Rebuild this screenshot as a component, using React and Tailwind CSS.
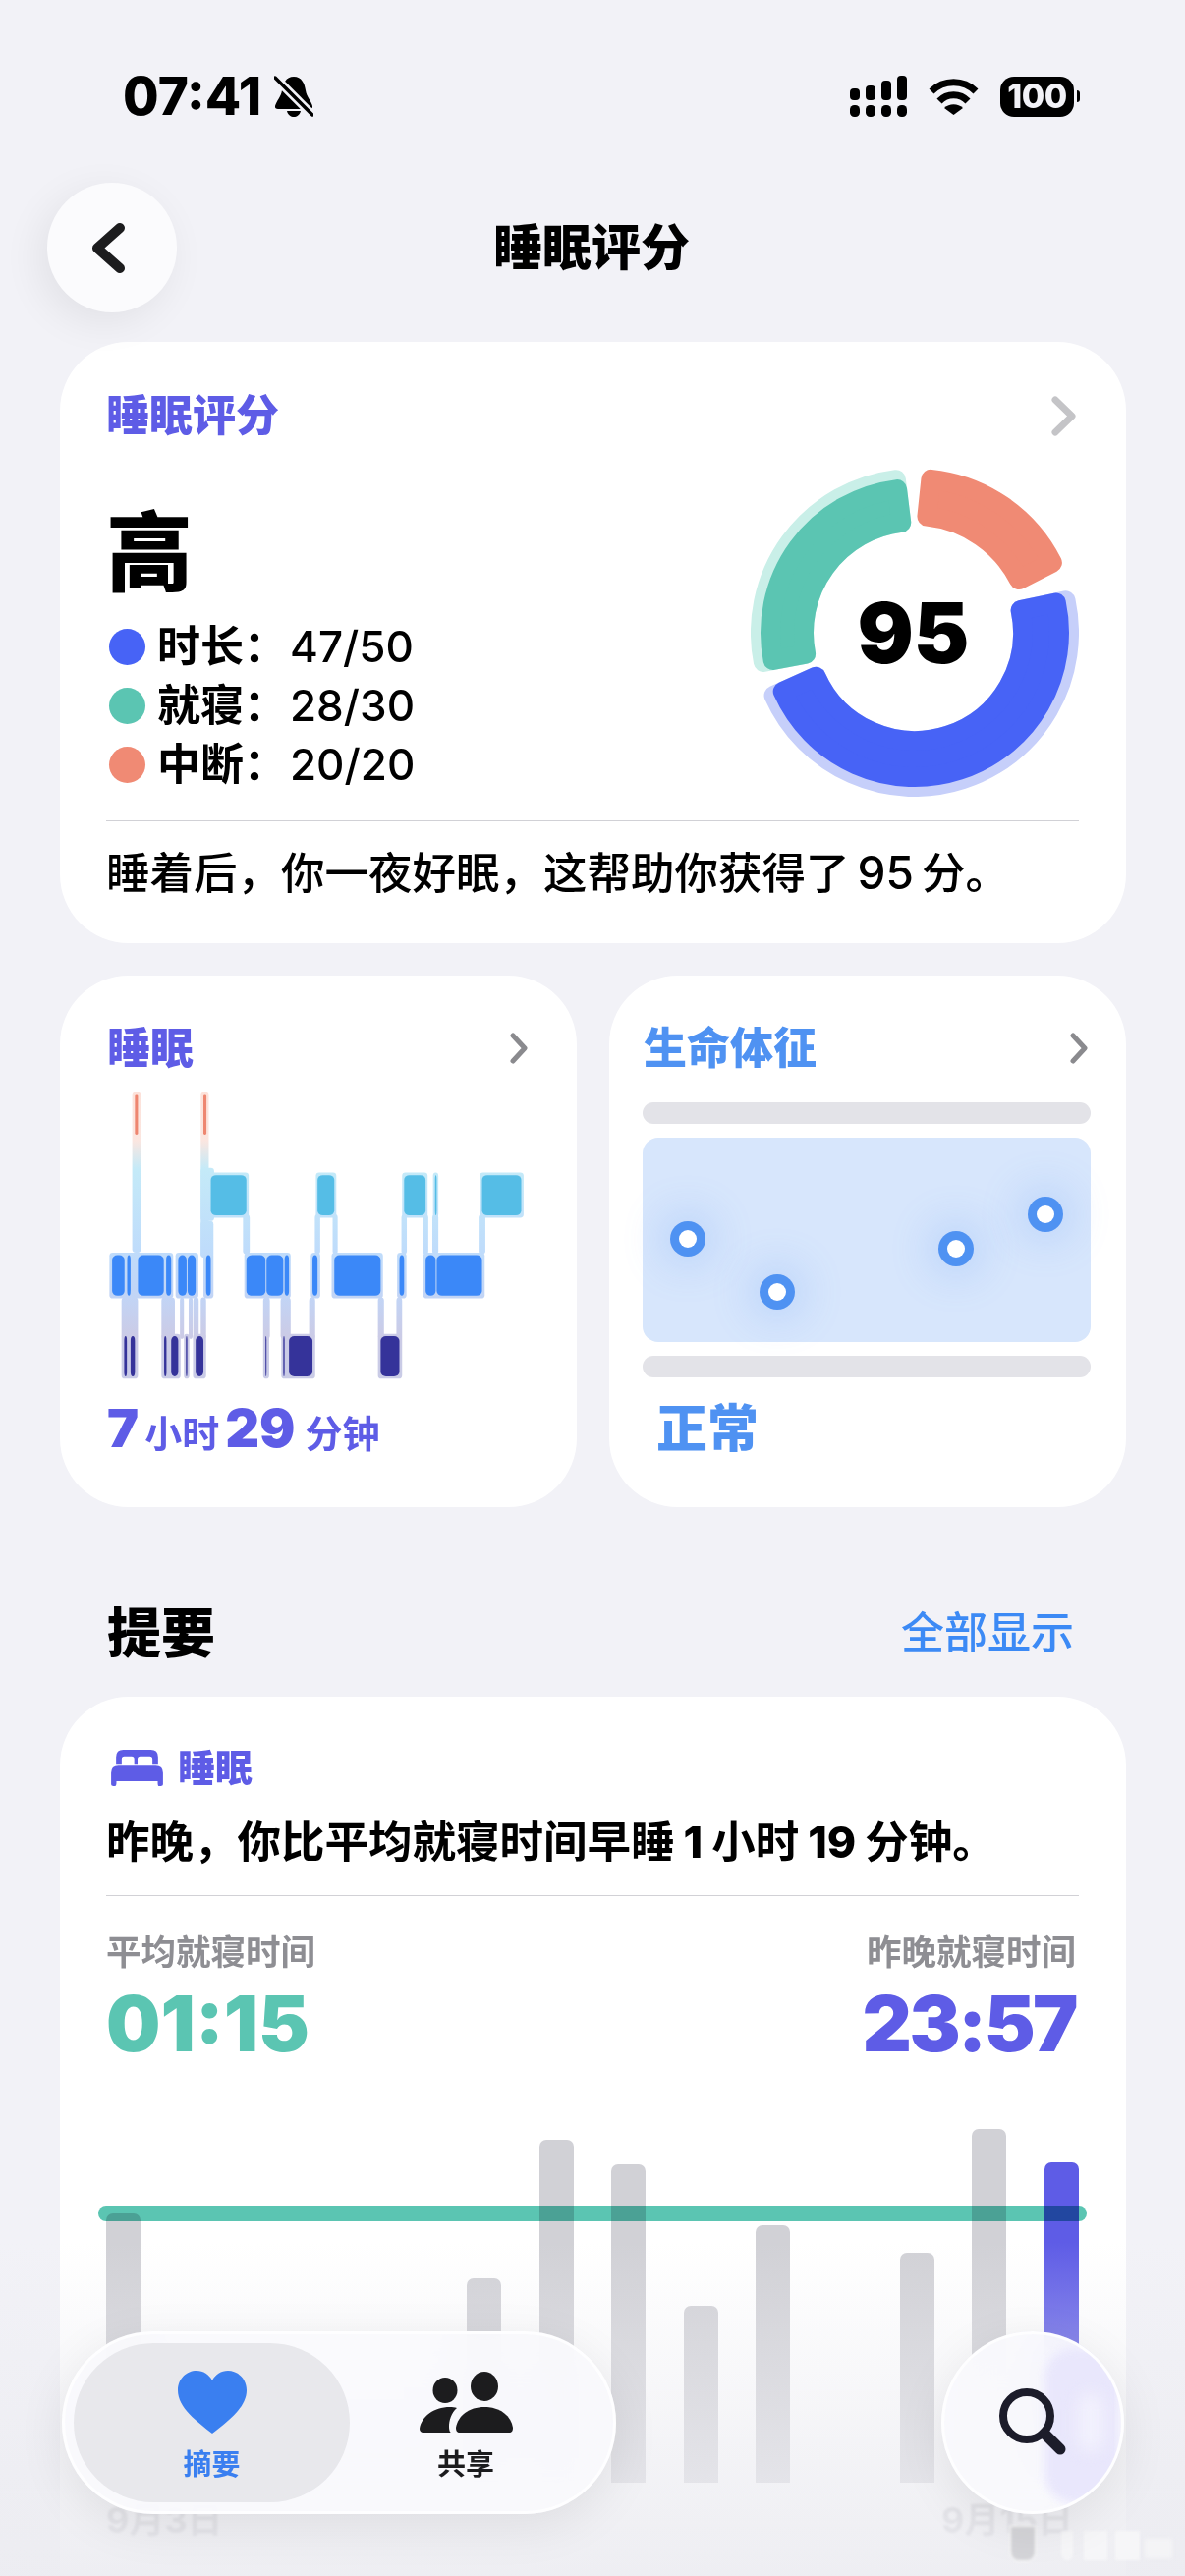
import React from 'react';

const pt = (c, r, a) => {
  const t = (a * Math.PI) / 180;
  return `${(c + r * Math.sin(t)).toFixed(2)} ${(c - r * Math.cos(t)).toFixed(2)}`;
};
const sector = (r0, r1, a0, a1) => {
  const c = 167;
  const large = a1 - a0 > 180 ? 1 : 0;
  return `M${pt(c, r1, a0)} A${r1} ${r1} 0 ${large} 1 ${pt(c, r1, a1)} L${pt(c, r0, a1)} A${r0} ${r0} 0 ${large} 0 ${pt(c, r0, a0)} Z`;
};

function Donut() {
  const seg = (d, color) => <path d={d} fill={color} stroke={color} strokeWidth="20" strokeLinejoin="round" />;
  return (
    <div className="relative h-[334px] w-[334px]">
      <svg width="334" height="334" viewBox="0 0 334 334">
        {seg(sector(110, 157, 78, 246), '#c6cffa')}
        {seg(sector(110, 147, 78, 246), '#4763f6')}
        {seg(sector(113, 157, 259, 353), '#c9efe8')}
        {seg(sector(113, 147, 259, 353), '#5bc5b2')}
        {seg(sector(119, 157, 6, 63), '#f08a74')}
      </svg>
      <div className="absolute inset-0 flex items-center justify-center pr-[3px] text-[85px] leading-none font-black text-black">95</div>
    </div>
  );
}

const Chevron = ({ big }) =>
  big ? (
    <svg width="25" height="41" viewBox="0 0 25 41" fill="none" stroke="#c4c4c7" strokeWidth="7" strokeLinecap="round" strokeLinejoin="round">
      <path d="M4 4 L21 20.5 L4 37" />
    </svg>
  ) : (
    <svg width="18" height="32" viewBox="0 0 18 32" fill="none" stroke="#8a8a8e" strokeWidth="5" strokeLinecap="round" strokeLinejoin="round">
      <path d="M3 3 L15 16 L3 29" />
    </svg>
  );

const LegendRow = ({ color, label, value }) => (
  <div className="flex h-[60px] items-center">
    <span className={`h-[37px] w-[37px] rounded-full ${color}`} />
    <span className="ml-[12px] w-[135px] text-[44px] leading-none font-bold text-black">{label}</span>
    <span className="text-[44px] leading-none font-medium text-black">{value}</span>
  </div>
);

const halos = [
  [218, 244, 332, 815], [422, 446, 332, 830], [422, 462, 560, 720], [422, 460, 720, 830],
  [186, 235, 950, 1075], [305, 345, 950, 1075], [360, 372, 950, 1075], [386, 398, 950, 1075], [400, 416, 950, 1075], [422, 438, 950, 1075],
  [608, 628, 950, 1075], [660, 690, 950, 1075], [745, 763, 950, 1075], [950, 968, 950, 1075], [1005, 1022, 950, 1075],
  [548, 568, 700, 820], [762, 778, 700, 820], [815, 830, 700, 820], [1020, 1036, 700, 820], [1084, 1100, 700, 820], [1112, 1130, 700, 820], [1250, 1270, 700, 820],
  [445, 565, 574, 710], [765, 826, 574, 710], [1022, 1098, 574, 710], [1114, 1130, 574, 710], [1253, 1384, 574, 710],
  [150, 340, 815, 953], [347, 415, 815, 953], [430, 460, 815, 953], [552, 690, 815, 953], [750, 778, 815, 953], [812, 965, 815, 953], [1007, 1035, 815, 953], [1085, 1268, 815, 953],
  [186, 235, 1060, 1195], [305, 362, 1060, 1195], [372, 388, 1060, 1195], [399, 438, 1060, 1195], [608, 626, 1060, 1195], [662, 763, 1060, 1195], [950, 1022, 1060, 1195],
];
const remBlocks = [[452, 558], [770, 820], [1028, 1092], [1120, 1125], [1260, 1377]];
const coreBlocks = [[158, 195], [203, 213], [235, 312], [319, 334], [355, 380], [383, 407], [438, 452], [558, 615], [618, 668], [672, 685], [755, 770], [820, 958], [1014, 1028], [1092, 1122], [1125, 1260]];
const deepBlocks = [[194, 202], [213, 226], [313, 320], [334, 355], [378, 382], [407, 430], [615, 618], [668, 672], [685, 755], [958, 1014]];

function Hypnogram() {
  const row = (blocks, y0, y1, color) =>
    blocks.map(([a, b]) => (
      <rect key={a} x={a} y={y0} width={b - a} height={y1 - y0} rx={Math.min((b - a) / 2, 16)} ry="14" fill={color} />
    ));
  return (
    <svg width="430" height="294" viewBox="146 330 1250 870" preserveAspectRatio="none">
      <defs>
        <linearGradient id="hg" gradientUnits="userSpaceOnUse" x1="0" y1="330" x2="0" y2="1195">
          <stop offset="0" stopColor="#fde2da" />
          <stop offset="0.17" stopColor="#fbe6e0" />
          <stop offset="0.27" stopColor="#c4eaf8" />
          <stop offset="0.55" stopColor="#bfdcfb" />
          <stop offset="0.72" stopColor="#c2d4f5" />
          <stop offset="0.85" stopColor="#cbcbe6" />
          <stop offset="1" stopColor="#c9cbe6" />
        </linearGradient>
      </defs>
      {halos.map(([a, b, c, d], i) => (
        <rect key={i} x={a} y={c} width={b - a} height={d - c} rx="10" ry="10" fill="url(#hg)" />
      ))}
      <rect x="226" y="340" width="9" height="120" rx="4" fill="#ee8670" />
      <rect x="430" y="340" width="9" height="120" rx="4" fill="#ee8670" />
      {row(remBlocks, 582, 703, '#55bde6')}
      {row(coreBlocks, 823, 945, '#3b88f8')}
      {row(deepBlocks, 1067, 1188, '#35339a')}
    </svg>
  );
}

const Ring = ({ cls }) => (
  <span className={`absolute flex h-[36px] w-[36px] items-center justify-center rounded-full bg-[#4f92f2] shadow-[0_0_40px_10px_rgba(90,150,245,0.22)] ${cls}`}>
    <span className="h-[18px] w-[18px] rounded-full bg-white" />
  </span>
);

const bars = [
  { h: 274 }, { h: 0 }, { h: 0 }, { h: 0 }, { h: 0 }, { h: 208 }, { h: 349 }, { h: 324 }, { h: 180 }, { h: 262 }, { h: 0 }, { h: 234 }, { h: 360 }, { h: 326, active: true },
];

export default function App() {
  return (
    <div className="relative h-[2622px] w-[1206px] overflow-hidden bg-[#f2f2f7] font-[Inter,'Noto_Sans_CJK_SC',sans-serif]">
      {/* status bar */}
      <div className="flex h-[119px] items-start justify-between pt-[77px] pr-[107px] pl-[125px]">
        <div className="flex items-center">
          <span className="text-[53px] leading-[42px] font-extrabold text-black">07:41</span>
          <svg className="ml-[13px]" width="40" height="42" viewBox="0 0 40 42">
            <path d="M20 1 C28 1 31 8 32 15 C33 22 38 26 39 31 C39.5 33 38 34 36 34 H4 C2 34 .5 33 1 31 C2 26 7 22 8 15 C9 8 12 1 20 1Z" fill="#000" />
            <path d="M13 36 H27 C26 40 23 42 20 42 C17 42 14 40 13 36Z" fill="#000" />
            <path d="M1 2 L39 40" stroke="#f2f2f7" strokeWidth="9" />
            <path d="M1 2 L39 40" stroke="#000" strokeWidth="3.5" strokeLinecap="round" />
          </svg>
        </div>
        <div className="flex items-center">
          <svg width="58" height="42" viewBox="0 0 58 42" fill="#000">
            <rect x="0" y="13" width="10" height="12" rx="4" />
            <rect x="16" y="10" width="10" height="15" rx="4" />
            <rect x="32" y="5" width="10" height="20" rx="4" />
            <rect x="48" y="0" width="10" height="25" rx="4" />
            <rect x="0" y="30" width="10" height="12" rx="4.5" />
            <rect x="16" y="30" width="10" height="12" rx="4.5" />
            <rect x="32" y="30" width="10" height="12" rx="4.5" />
            <rect x="48" y="30" width="10" height="12" rx="4.5" />
          </svg>
          <svg className="ml-[22px]" width="51" height="38" viewBox="0 0 51 38" fill="none" stroke="#000" strokeWidth="7">
            <path d="M3 14 A32 32 0 0 1 48 14" />
            <path d="M11 24 A20 20 0 0 1 40 24" />
            <path d="M16 31 A14 14 0 0 1 35 31 L25.5 38 Z" fill="#000" stroke="none" />
          </svg>
          <div className="ml-[22px] flex items-center">
            <div className="flex h-[41px] w-[75px] items-center justify-center rounded-[14px] bg-black text-[34px] leading-none font-extrabold tracking-[-0.5px] text-[#f2f2f7]">100</div>
            <span className="ml-[3px] h-[12px] w-[3px] rounded-r-full bg-black" />
          </div>
        </div>
      </div>

      {/* header */}
      <div className="mt-[67px] grid h-[132px] grid-cols-[132px_1fr_132px] items-center px-[48px]">
        <button className="flex h-[132px] w-[132px] items-center justify-center rounded-full bg-[#fbfbfd] pr-[7px] shadow-[-8px_10px_40px_rgba(0,0,0,0.07)]">
          <svg width="33" height="51" viewBox="0 0 33 51" fill="none" stroke="#1c1c1e" strokeWidth="10" strokeLinecap="round" strokeLinejoin="round">
            <path d="M28 5 L5 25.5 L28 46" />
          </svg>
        </button>
        <h1 className="pr-[2px] text-center text-[50px] leading-none font-black text-black">睡眠评分</h1>
      </div>

      {/* score card */}
      <section className="mt-[30px] ml-[61px] h-[612px] w-[1085px] rounded-[70px] bg-white pt-[50px] pr-[48px] pl-[47px]">
        <div className="flex h-[50px] items-center justify-between">
          <span className="text-[44px] leading-none font-black text-[#5e5ce6]">睡眠评分</span>
          <span className="mr-[3px] flex"><Chevron big /></span>
        </div>
        <div className="mt-[29px] flex h-[334px] justify-between">
          <div className="pl-[3px]">
            <div className="mt-[40px] -ml-[3px] h-[90px] text-[88px] leading-[90px] font-black text-black">高</div>
            <div className="mt-[21px]">
              <LegendRow color="bg-[#4763f6]" label="时长：" value="47/50" />
              <LegendRow color="bg-[#5bc5b2]" label="就寝：" value="28/30" />
              <LegendRow color="bg-[#f08a74]" label="中断：" value="20/20" />
            </div>
          </div>
          <Donut />
        </div>
        <div className="mt-[24px] h-px bg-[#d1d1d6]" />
        <p className="mt-[22px] text-[44.5px] leading-[60px] font-medium text-black">
          睡着后，你一夜好眠，这帮助你获得了<span className="mx-[8px] text-[46px]">95</span>分。
        </p>
      </section>

      {/* two cards */}
      <div className="mt-[33px] ml-[61px] flex w-[1085px] gap-[33px]">
        <section className="h-[541px] w-[526px] rounded-[70px] bg-white pt-[49px] pr-[50px] pl-[48px]">
          <div className="flex h-[50px] items-center justify-between">
            <span className="text-[44px] leading-none font-black text-[#5e5ce6]">睡眠</span>
            <Chevron />
          </div>
          <div className="mt-[19px] ml-[1px] flex"><Hypnogram /></div>
          <div className="mt-[19px] flex h-[60px] items-baseline text-[#5e5ce6]">
            <span className="text-[54px] leading-[60px] font-black">7</span>
            <span className="ml-[6px] text-[38px] font-bold">小时</span>
            <span className="ml-[6px] text-[54px] leading-[60px] font-black">29</span>
            <span className="ml-[10px] text-[38px] font-bold">分钟</span>
          </div>
        </section>
        <section className="h-[541px] w-[526px] rounded-[70px] bg-white pt-[49px] pr-[36px] pl-[34px]">
          <div className="flex h-[50px] items-center justify-between pr-[3px] pl-[1px]">
            <span className="text-[44px] leading-none font-black text-[#4f92f2]">生命体征</span>
            <Chevron />
          </div>
          <div className="mt-[30px] h-[22px] rounded-full bg-[#e3e3e8]" />
          <div className="relative mt-[14px] h-[208px] rounded-[16px] bg-[#d7e6fc]">
            <Ring cls="top-[85px] left-[28px]" />
            <Ring cls="top-[139px] left-[119px]" />
            <Ring cls="top-[95px] left-[301px]" />
            <Ring cls="top-[60px] left-[392px]" />
          </div>
          <div className="mt-[14px] h-[22px] rounded-full bg-[#e3e3e8]" />
          <div className="mt-[23px] ml-[14px] text-[52px] leading-[60px] font-black text-[#4f92f2]">正常</div>
        </section>
      </div>

      {/* summary heading */}
      <div className="mt-[93px] flex h-[70px] items-center justify-between pr-[113px] pl-[109px]">
        <h2 className="text-[55px] leading-none font-black text-black">提要</h2>
        <span className="text-[44px] leading-none font-medium text-[#3c8af5]">全部显示</span>
      </div>

      {/* summary card */}
      <section className="mt-[30px] ml-[61px] h-[960px] w-[1085px] rounded-[70px] bg-white pt-[50px] pr-[48px] pl-[47px]">
        <div className="flex h-[44px] items-center pl-[5px] text-[#5e5ce6]">
          <svg width="53" height="37" viewBox="0 0 157 110" fill="#5e5ce6">
            <path d="M15 45 V22 Q15 0 37 0 H120 Q142 0 142 22 V45 H125 V28 Q125 20 117 20 H88 Q80 20 80 28 V45 H70 V28 Q70 20 62 20 H40 Q32 20 32 28 V45 Z" />
            <path d="M0 70 Q0 48 22 48 H135 Q157 48 157 70 V105 Q157 110 150 110 H145 Q141 110 141 100 V95 H16 V100 Q16 110 10 110 H7 Q0 110 0 105 Z" />
          </svg>
          <span className="ml-[15px] text-[38px] leading-none font-black">睡眠</span>
        </div>
        <p className="mt-[29px] text-[44.5px] leading-[50px] font-bold text-black">
          昨晚，你比平均就寝时间早睡<span className="mx-[9px] font-extrabold">1</span>小时<span className="mx-[9px] font-extrabold">19</span>分钟。
        </p>
        <div className="mt-[29px] h-px bg-[#d1d1d6]" />
        <div className="mt-[36px] flex h-[44px] items-center justify-between pr-[3px] text-[35.5px] leading-none font-bold text-[#8e8e93]">
          <span>平均就寝时间</span>
          <span>昨晚就寝时间</span>
        </div>
        <div className="mt-[5px] flex h-[90px] items-center justify-between pr-[3px] text-[78px] leading-none font-black">
          <span className="text-[#5bc5b2]">01:15</span>
          <span className="tracking-[-2.5px] text-[#5e5ce6]">23:57</span>
        </div>
        <div className="relative flex h-[422px] items-end justify-between">
          {bars.map((b, i) => (
            <div
              key={i}
              className={b.active ? 'w-[35px] rounded-t-[7px] bg-[#5e5ce6]' : 'w-[35px] rounded-t-[7px] bg-[#d1d1d6]'}
              style={{ height: b.h }}
            />
          ))}
          <div className="absolute top-[140px] -right-[8px] -left-[8px] h-[16px] rounded-full bg-[#5bc5b2] mix-blend-multiply" />
        </div>
        <div className="mt-[18px] flex h-[40px] items-center justify-between pr-[6px] text-[36px] leading-none font-bold text-[#c4c4c9] blur-[1px]">
          <span>9月3日</span>
          <span>9月15日</span>
        </div>
      </section>

      {/* bottom fade */}
      <div className="absolute inset-x-0 bottom-0 h-[340px] bg-[linear-gradient(to_bottom,rgba(236,236,241,0),rgba(236,236,241,0.68)_70%,rgba(236,236,241,0.9))]" />

      {/* blurred watermark */}
      <div className="absolute top-[2570px] left-[1027px] h-[38px] w-[28px] rounded-b-[10px] border-2 border-white/80 bg-[#d4d4d8] blur-[1.5px]" />
      <div className="absolute top-[2576px] left-[1080px] h-[30px] w-[12px] rounded-b-[6px] bg-[#f6f6f8] blur-[1.5px]" />
      <div className="absolute top-[2576px] left-[1103px] h-[30px] w-[24px] bg-[#f6f6f8] blur-[1.5px]" />
      <div className="absolute top-[2576px] left-[1135px] h-[30px] w-[25px] bg-[#f6f6f8] blur-[1.5px]" />
      <div className="absolute top-[2584px] left-[1165px] h-[20px] w-[28px] bg-[#f4f4f6] blur-[2px]" />

      {/* tab bar */}
      <nav className="absolute top-[2373px] left-[63px] flex h-[186px] w-[564px] rounded-full border-[3px] border-white/80 bg-[rgba(250,250,253,0.9)] p-[9px] shadow-[0_12px_50px_rgba(0,0,0,0.08)] backdrop-blur-xl">
        <div className="flex h-[162px] w-[281px] flex-col items-center rounded-full bg-[#e8e8ec] pt-[28px]">
          <svg width="70" height="64" viewBox="0 0 70 64" fill="#3a7ff0">
            <path d="M35 64 C20 52 0 38 0 20 C0 8 9 0 19 0 C26 0 32 4 35 10 C38 4 44 0 51 0 C61 0 70 8 70 20 C70 38 50 52 35 64 Z" />
          </svg>
          <span className="mt-[14px] text-[29px] leading-[36px] font-bold text-[#3a7ff0]">摘要</span>
        </div>
        <div className="flex h-[162px] w-[236px] flex-col items-center pt-[29px]">
          <svg width="95" height="63" viewBox="0 0 95 63" fill="#1c1c1e">
            <ellipse cx="26" cy="19" rx="12.5" ry="13" />
            <ellipse cx="66" cy="15" rx="14" ry="15" />
            <path d="M0 58 C2 46 14 36 31 36 C33 36 36 36 38 37 C32 42 30 50 30 56 C30 59 31 62 32 62 H4 C1 62 0 60 0 58 Z" />
            <path d="M37 57 C39 45 50 36 66 36 C82 36 93 45 95 57 C95 60 94 62 91 62 H41 C38 62 37 60 37 57 Z" />
          </svg>
          <span className="mt-[14px] text-[29px] leading-[36px] font-bold text-[#1c1c1e]">共享</span>
        </div>
      </nav>

      {/* search */}
      <button className="absolute top-[2373px] left-[958px] flex h-[186px] w-[186px] items-center justify-center overflow-hidden rounded-full border-[3px] border-white/80 bg-[rgba(250,250,253,0.92)] shadow-[0_12px_50px_rgba(0,0,0,0.08)] backdrop-blur-xl">
        <span className="absolute top-[14px] left-[102px] h-[158px] w-[76px] rounded-[30px] bg-[#e9e7fc] blur-[5px]" />
        <span className="absolute top-[60px] left-[136px] h-[60px] w-[26px] rounded-full bg-[#f2f1fd] blur-[8px]" />
        <svg className="relative" width="70" height="70" viewBox="0 0 70 70" fill="none" stroke="#1c1c2a" strokeLinecap="round">
          <circle cx="29" cy="28" r="24" strokeWidth="8" />
          <path d="M47 46 L63 62" strokeWidth="11" />
        </svg>
      </button>
    </div>
  );
}
